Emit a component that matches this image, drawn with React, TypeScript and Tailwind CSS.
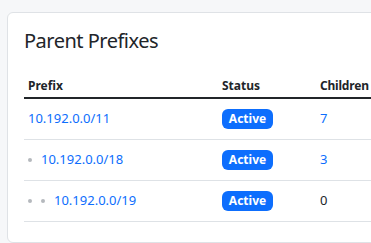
const rows = [
  { prefix: '10.192.0.0/11', depth: 0, children: 7 },
  { prefix: '10.192.0.0/18', depth: 1, children: 3 },
  { prefix: '10.192.0.0/19', depth: 2, children: 0 },
];

export default function App() {
  return (
    <div className="min-h-screen overflow-hidden bg-[#f6f7f9] pl-[7px] pt-3" style={{ fontFamily: '"Noto Sans", sans-serif' }}>
      <div className="w-[420px] rounded-md border border-[#dfe2e6] bg-white px-4 pb-5 pt-4">
        <h5 className="mb-[17px] text-[20px] leading-6 tracking-[-0.5px] text-[#212529]">Parent Prefixes</h5>
        <table className="w-full border-collapse text-[13px] text-[#212529]">
          <thead>
            <tr className="h-[28px] border-b-2 border-[#212529] text-left text-[12px]">
              <th className="w-[194px] px-1 pt-1 font-bold">Prefix</th>
              <th className="w-[98px] px-1 pt-1 font-bold">Status</th>
              <th className="px-1 pt-1 font-bold tracking-[-0.2px]">Children</th>
            </tr>
          </thead>
          <tbody>
            {rows.map((r) => (
              <tr key={r.prefix} className="h-[41px] border-b border-[#dee2e6]">
                <td className="px-1">
                  {Array.from({ length: r.depth }).map((_, i) => (
                    <span key={i} className="mr-[9px] inline-block h-1 w-1 rounded-full bg-[#b5b9bd] align-middle" />
                  ))}
                  <a className="text-[#0d6efd]">{r.prefix}</a>
                </td>
                <td className="px-1">
                  <span className="inline-flex h-5 w-[51px] items-center justify-center rounded-[6px] bg-[#0d6efd] text-[12px] font-bold text-white">Active</span>
                </td>
                <td className="px-1">
                  {r.children > 0 ? <a className="text-[#0d6efd]">{r.children}</a> : <span>{r.children}</span>}
                </td>
              </tr>
            ))}
          </tbody>
        </table>
      </div>
    </div>
  );
}
